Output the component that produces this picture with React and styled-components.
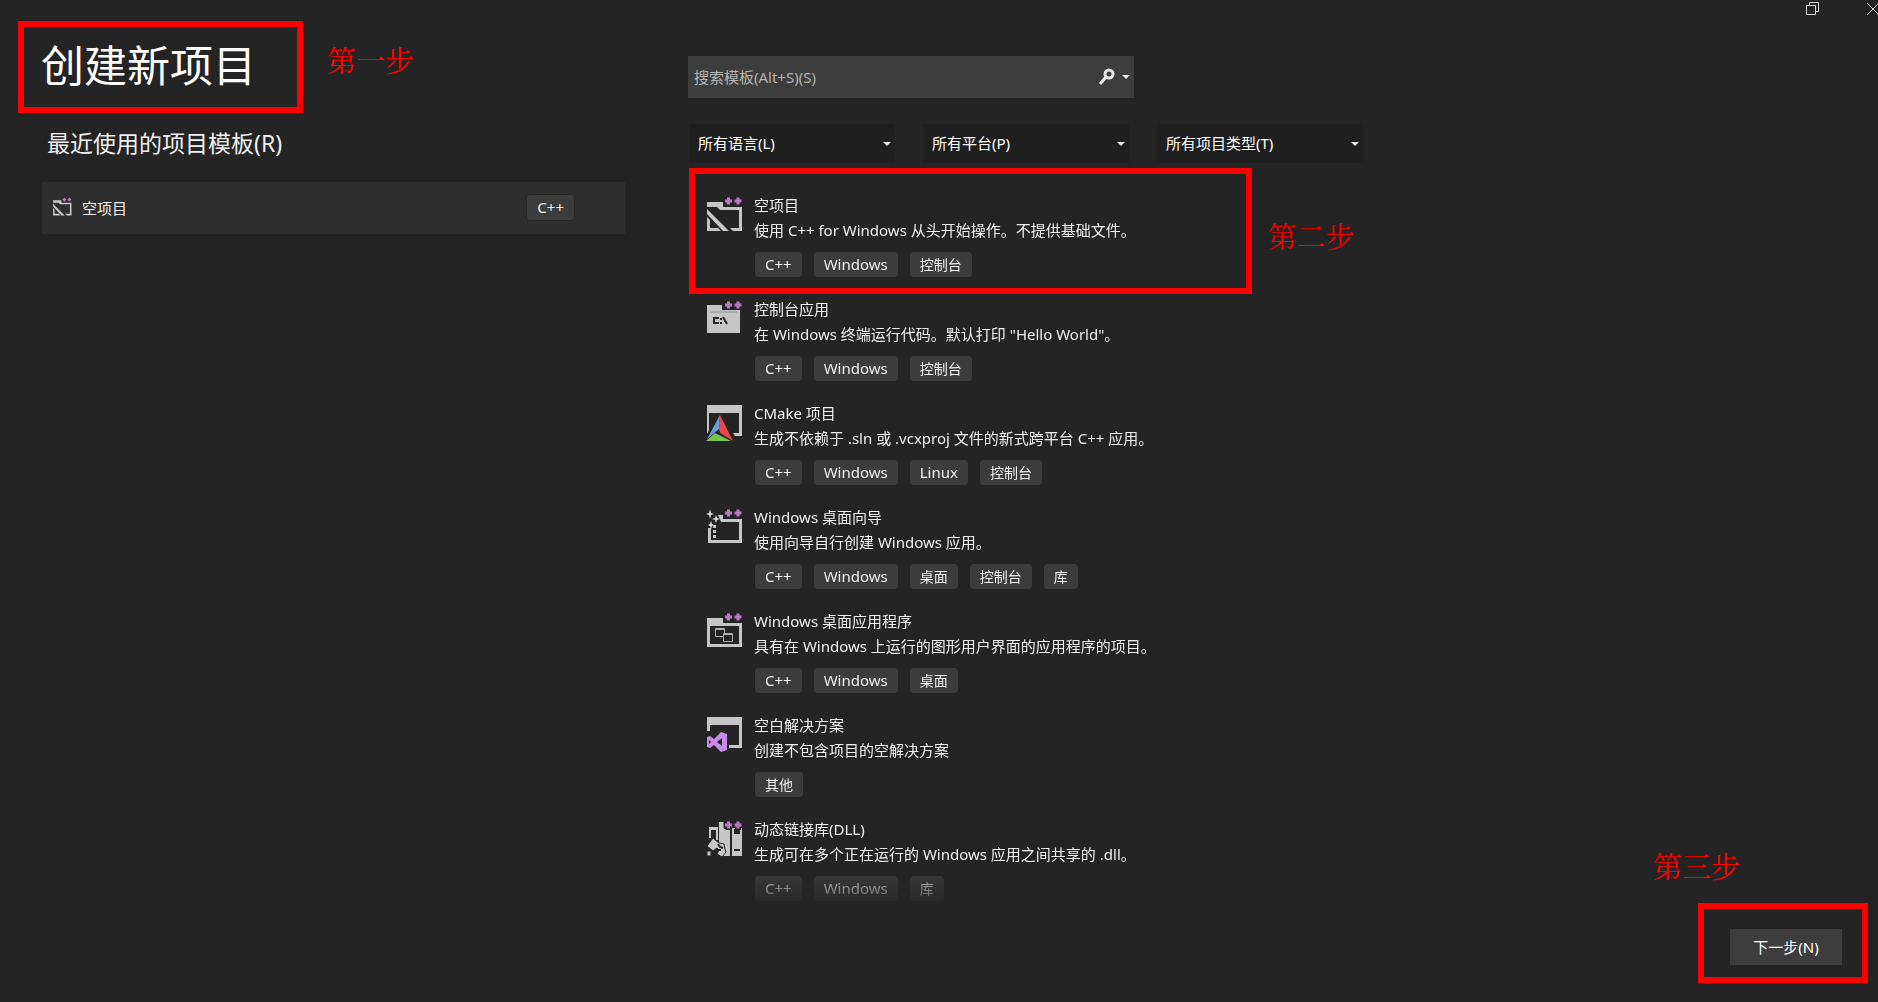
import React from 'react';
import styled, { createGlobalStyle } from 'styled-components';

const GlobalStyle = createGlobalStyle`
  * {
    box-sizing: border-box;
  }

  body {
    margin: 0;
    background-color: #242424;
    color: #f0f0f0;
    font-family: 'Noto Sans', 'Noto Sans CJK SC', sans-serif;
    font-size: 15px;
  }

  h1,
  h2,
  h3,
  p,
  ul {
    margin: 0;
    padding: 0;
    font-weight: 400;
  }

  button,
  input,
  select {
    font: inherit;
    border: none;
    border-radius: 0;
  }
`;

const Window = styled.div`
  display: flex;
  flex-direction: column;
  min-height: 100vh;
  overflow: hidden;
`;

const TitleBar = styled.header`
  display: flex;
  justify-content: flex-end;
  gap: 42px;
  height: 21px;
  margin-right: -4px;
`;

const WindowButton = styled.button`
  display: flex;
  align-items: center;
  padding: 0 2px 4px;
  background-color: transparent;
  color: #d8d8d8;
`;

const Main = styled.main`
  display: flex;
  align-items: flex-start;
  flex-grow: 1;
`;

const Recent = styled.section`
  width: 607px;
  flex-shrink: 0;
  margin: 0 63px 0 18px;
`;

const StepRow = styled.div`
  display: flex;
  gap: ${(props) => props.$gap}px;
`;

const Highlight = styled.div`
  border: 6px solid #ff0000;
`;

const TitleBox = styled(Highlight)`
  width: 285px;
  height: 92px;
  padding: 8px 17px;
`;

const Step = styled.p`
  padding-top: ${(props) => props.$top || 0}px;
  color: #ff0000;
  font-family: 'Noto Serif CJK SC', 'Liberation Serif', 'Noto Sans CJK SC', serif;
  font-size: 29px;
  line-height: 36px;
`;

const Title = styled.h1`
  font-size: 43px;
  line-height: 62px;
  color: #ffffff;
  white-space: nowrap;
`;

const Subtitle = styled.h2`
  margin: 11px 0 19px 29px;
  font-size: 23px;
  line-height: 39px;
`;

const RecentItem = styled.button`
  display: flex;
  align-items: center;
  gap: 10px;
  width: 583px;
  height: 52px;
  margin-left: 24px;
  padding: 0 50px 2px 10px;
  background-color: #2e2e2e;
  color: inherit;
  text-align: left;
`;

const RecentName = styled.span`
  flex-grow: 1;
`;

const Browse = styled.section`
  flex-grow: 1;
  min-width: 0;
  padding-top: 35px;
`;

const SearchBox = styled.div`
  display: flex;
  align-items: center;
  width: 446px;
  height: 42px;
  padding-right: 4px;
  background-color: #3d3d3d;
`;

const SearchInput = styled.input`
  flex-grow: 1;
  height: 100%;
  padding: 0 6px;
  background-color: transparent;
  color: #f0f0f0;
  outline: none;

  &::placeholder {
    color: #b4b4b4;
    opacity: 1;
  }
`;

const SearchButton = styled.button`
  display: flex;
  align-items: center;
  gap: 6px;
  padding: 0;
  background-color: transparent;
  color: #e6e6e6;
`;

const Filters = styled.div`
  display: flex;
  gap: 28px;
  margin: 26px 0 5px 1px;
`;

const Filter = styled.label`
  display: flex;
  align-items: center;
  width: 206px;
  height: 39px;
  padding-right: 4px;
  background-color: #1f1f1f;
`;

const FilterSelect = styled.select`
  appearance: none;
  flex-grow: 1;
  height: 100%;
  padding: 0 9px 2px;
  background-color: transparent;
  color: #ffffff;
  outline: none;
`;

const TemplateList = styled.ul`
  height: 734px;
  margin-left: 1px;
  overflow: hidden;
  list-style: none;
  mask-image: linear-gradient(#000 700px, transparent 742px);
`;

const TemplateBox = styled(Highlight)`
  width: 563px;
  height: 126px;
  padding: 19px 10px 0;
`;

const TemplateItem = styled.li`
  height: ${(props) => (props.$boxed ? 129 : 104)}px;
  padding-left: ${(props) => (props.$boxed ? 0 : 16)}px;
`;

const Template = styled.div`
  display: flex;
  gap: 11px;
`;

const IconSlot = styled.div`
  padding-top: 3px;
`;

const TemplateText = styled.div`
  line-height: 25px;
`;

const TemplateName = styled.h3`
  font-size: 15px;
`;

const Tags = styled.div`
  display: flex;
  gap: 12px;
  margin: 9px 0 0 1px;
`;

const Tag = styled.span`
  height: 25px;
  padding: 0 10px;
  border-radius: 4px;
  background-color: #3c3c3c;
  font-size: ${(props) => (props.$latin ? 15 : 14)}px;
  line-height: 25px;
`;

const RecentTag = styled(Tag)`
  height: 27px;
  border: 1px solid #262626;
`;

const Footer = styled.footer`
  align-self: flex-end;
  display: flex;
  flex-direction: column;
  gap: 19px;
  margin: 0 10px 19px 0;
`;

const NextStep = styled(Step)`
  margin-left: -45px;
`;

const NextBox = styled(Highlight)`
  width: 170px;
  height: 80px;
  padding: 20px 26px;
`;

const NextButton = styled.button`
  width: 112px;
  height: 36px;
  padding: 0 0 2px;
  background-color: #3d3d3d;
  color: #ffffff;
`;

const Caret = () => (
  <svg width="8" height="4" viewBox="0 0 8 4" aria-hidden="true">
    <path d="M0 0h8L4 4z" fill="#e6e6e6" />
  </svg>
);

const PlusPlus = () => (
  <>
    <path d="M18.5 5h19M23.5 0v10M33 0v10" stroke="#242424" strokeWidth="6" />
    <path d="M20 5h7M23.5 1.5v7M29.5 5h7M33 1.5v7" stroke="#b978c0" strokeWidth="3" />
  </>
);

const icons = {
  empty: (
    <>
      <path d="M2 6h16v5h19v24H28l-3-3h9V14H15l-3-3H2z" fill="#c6c6c6" />
      <path d="M2 13l22 22h-6L2 18zM2 21l3 3v8h8l3 3H2z" fill="#c6c6c6" />
      <PlusPlus />
    </>
  ),
  console: (
    <>
      <path d="M2 5h15v5h18v23H2z" fill="#c6c6c6" />
      <path d="M5 12h27" stroke="#8e8e8e" />
      <path d="M14 18H9v5h5M16 18v2M16 22v2M18 17l4 7" stroke="#242424" strokeWidth="2" fill="none" />
      <PlusPlus />
    </>
  ),
  cmake: (
    <>
      <path d="M2 1h35v31h-7l-2-3h6V9H4v17l-2 4z" fill="#c6c6c6" />
      <path d="M15 11L2 35l12-10z" fill="#6c9bd8" />
      <path d="M15 11l13 26-13-8-1-4z" fill="#e5494f" />
      <path d="M1 37l9-8 16 8z" fill="#7cc24e" />
    </>
  ),
  wizard: (
    <>
      <path d="M13 7h5v4h19v24H3V20h3v12h28V14H16z" fill="#c6c6c6" />
      <path
        d="M5 1l1 4 3 1-3 1-1 4-1-4-3-1 3-1zM11 7l1 3 3 1-3 1-1 3-1-3-3-1 3-1zM6 13l1 3 2 1-2 1-1 3-1-3-2-1 2-1z"
        fill="#dedede"
      />
      <path d="M8 17h3v3H8zM8 22h3v3H8zM8 27h3v3H8z" fill="#c6c6c6" />
      <PlusPlus />
    </>
  ),
  desktop: (
    <>
      <path d="M2 6h16v5h19v24H2zM5 14v18h29V14z" fill="#c6c6c6" fillRule="evenodd" />
      <path d="M10.500 16.500h9v8h-9zM10 17.500h9" stroke="#b0b0b0" fill="none" />
      <path d="M18.500 21.500h9v8h-9zM18 22.500h9" stroke="#b0b0b0" fill="#242424" />
      <PlusPlus />
    </>
  ),
  solution: (
    <>
      <path d="M2 1h35v31H24v-3h10V9H5v6H2z" fill="#c6c6c6" />
      <path
        d="M16 16l6 2v16l-6 2-7-7-4 3-3-1V21l3-1 4 3zM17 22l-5 4 5 4zM4 24v4l2-2z"
        fill="#c98be8"
        fillRule="evenodd"
      />
    </>
  ),
  library: (
    <>
      <path
        d="M4 7h9v13h-2v-10H6v8H4zM14 2h5v7h6v27h-7v-5h-4zM27 8h10v28H27zM29 9v5h6V9zM29 29v2h6v-2z"
        fill="#c6c6c6"
        fillRule="evenodd"
      />
      <path
        d="M8 18l6 5 5 1 1 5 1 3-4 5-5-3 2-4-2-2-4 3-6-5zM2 31h4v5H2z"
        fill="#c6c6c6"
        stroke="#242424"
        strokeWidth="1"
      />
      <path d="M13 24l2 3 3 1M13 30h3" stroke="#242424" strokeWidth="2" fill="none" />
      <PlusPlus />
    </>
  ),
};

const TemplateIcon = ({ name, size }) => (
  <svg width={size} height={size} viewBox="0 0 38 38" aria-hidden="true">
    {icons[name]}
  </svg>
);

const filters = ['所有语言(L)', '所有平台(P)', '所有项目类型(T)'];

const latinTags = ['C++', 'Windows', 'Linux'];

const templates = [
  {
    icon: 'empty',
    name: '空项目',
    description: '使用 C++ for Windows 从头开始操作。不提供基础文件。',
    tags: ['C++', 'Windows', '控制台'],
  },
  {
    icon: 'console',
    name: '控制台应用',
    description: '在 Windows 终端运行代码。默认打印 "Hello World"。',
    tags: ['C++', 'Windows', '控制台'],
  },
  {
    icon: 'cmake',
    name: 'CMake 项目',
    description: '生成不依赖于 .sln 或 .vcxproj 文件的新式跨平台 C++ 应用。',
    tags: ['C++', 'Windows', 'Linux', '控制台'],
  },
  {
    icon: 'wizard',
    name: 'Windows 桌面向导',
    description: '使用向导自行创建 Windows 应用。',
    tags: ['C++', 'Windows', '桌面', '控制台', '库'],
  },
  {
    icon: 'desktop',
    name: 'Windows 桌面应用程序',
    description: '具有在 Windows 上运行的图形用户界面的应用程序的项目。',
    tags: ['C++', 'Windows', '桌面'],
  },
  {
    icon: 'solution',
    name: '空白解决方案',
    description: '创建不包含项目的空解决方案',
    tags: ['其他'],
  },
  {
    icon: 'library',
    name: '动态链接库(DLL)',
    description: '生成可在多个正在运行的 Windows 应用之间共享的 .dll。',
    tags: ['C++', 'Windows', '库'],
  },
];

const TemplateEntry = ({ template }) => (
  <Template>
    <IconSlot>
      <TemplateIcon name={template.icon} size={38} />
    </IconSlot>
    <TemplateText>
      <TemplateName>{template.name}</TemplateName>
      <p>{template.description}</p>
      <Tags>
        {template.tags.map((tag) => (
          <Tag key={tag} $latin={latinTags.includes(tag)}>
            {tag}
          </Tag>
        ))}
      </Tags>
    </TemplateText>
  </Template>
);

const App = () => (
  <Window>
    <GlobalStyle />
    <TitleBar>
      <WindowButton aria-label="还原">
        <svg width="14" height="14" viewBox="0 0 14 14" fill="none" stroke="currentColor">
          <path d="M.5 3.500h9v9h-9zM3.500 3.500v-3h9v9h-3" />
        </svg>
      </WindowButton>
      <WindowButton aria-label="关闭">
        <svg width="14" height="14" viewBox="0 0 14 14" stroke="currentColor">
          <path d="M1 1l12 12M13 1L1 13" />
        </svg>
      </WindowButton>
    </TitleBar>
    <Main>
      <Recent>
        <StepRow $gap={24}>
          <TitleBox>
            <Title>创建新项目</Title>
          </TitleBox>
          <Step $top={21}>第一步</Step>
        </StepRow>
        <Subtitle>最近使用的项目模板(R)</Subtitle>
        <RecentItem>
          <TemplateIcon name="empty" size={20} />
          <RecentName>空项目</RecentName>
          <RecentTag $latin>C++</RecentTag>
        </RecentItem>
      </Recent>
      <Browse>
        <SearchBox>
          <SearchInput type="text" aria-label="搜索模板" placeholder="搜索模板(Alt+S)(S)" />
          <SearchButton aria-label="搜索">
            <svg width="18" height="18" viewBox="0 0 18 18" fill="none" stroke="currentColor">
              <circle cx="11" cy="6" r="4" strokeWidth="3" />
              <path d="M8 9l-6 7" strokeWidth="3" />
            </svg>
            <Caret />
          </SearchButton>
        </SearchBox>
        <Filters>
          {filters.map((filter) => (
            <Filter key={filter}>
              <FilterSelect aria-label={filter}>
                <option>{filter}</option>
              </FilterSelect>
              <Caret />
            </Filter>
          ))}
        </Filters>
        <TemplateList>
          {templates.map((template, index) => (
            <TemplateItem key={template.name} $boxed={index === 0}>
              {index === 0 ? (
                <StepRow $gap={16}>
                  <TemplateBox>
                    <TemplateEntry template={template} />
                  </TemplateBox>
                  <Step $top={50}>第二步</Step>
                </StepRow>
              ) : (
                <TemplateEntry template={template} />
              )}
            </TemplateItem>
          ))}
        </TemplateList>
      </Browse>
      <Footer>
        <NextStep>第三步</NextStep>
        <NextBox>
          <NextButton>下一步(N)</NextButton>
        </NextBox>
      </Footer>
    </Main>
  </Window>
);

export default App;
